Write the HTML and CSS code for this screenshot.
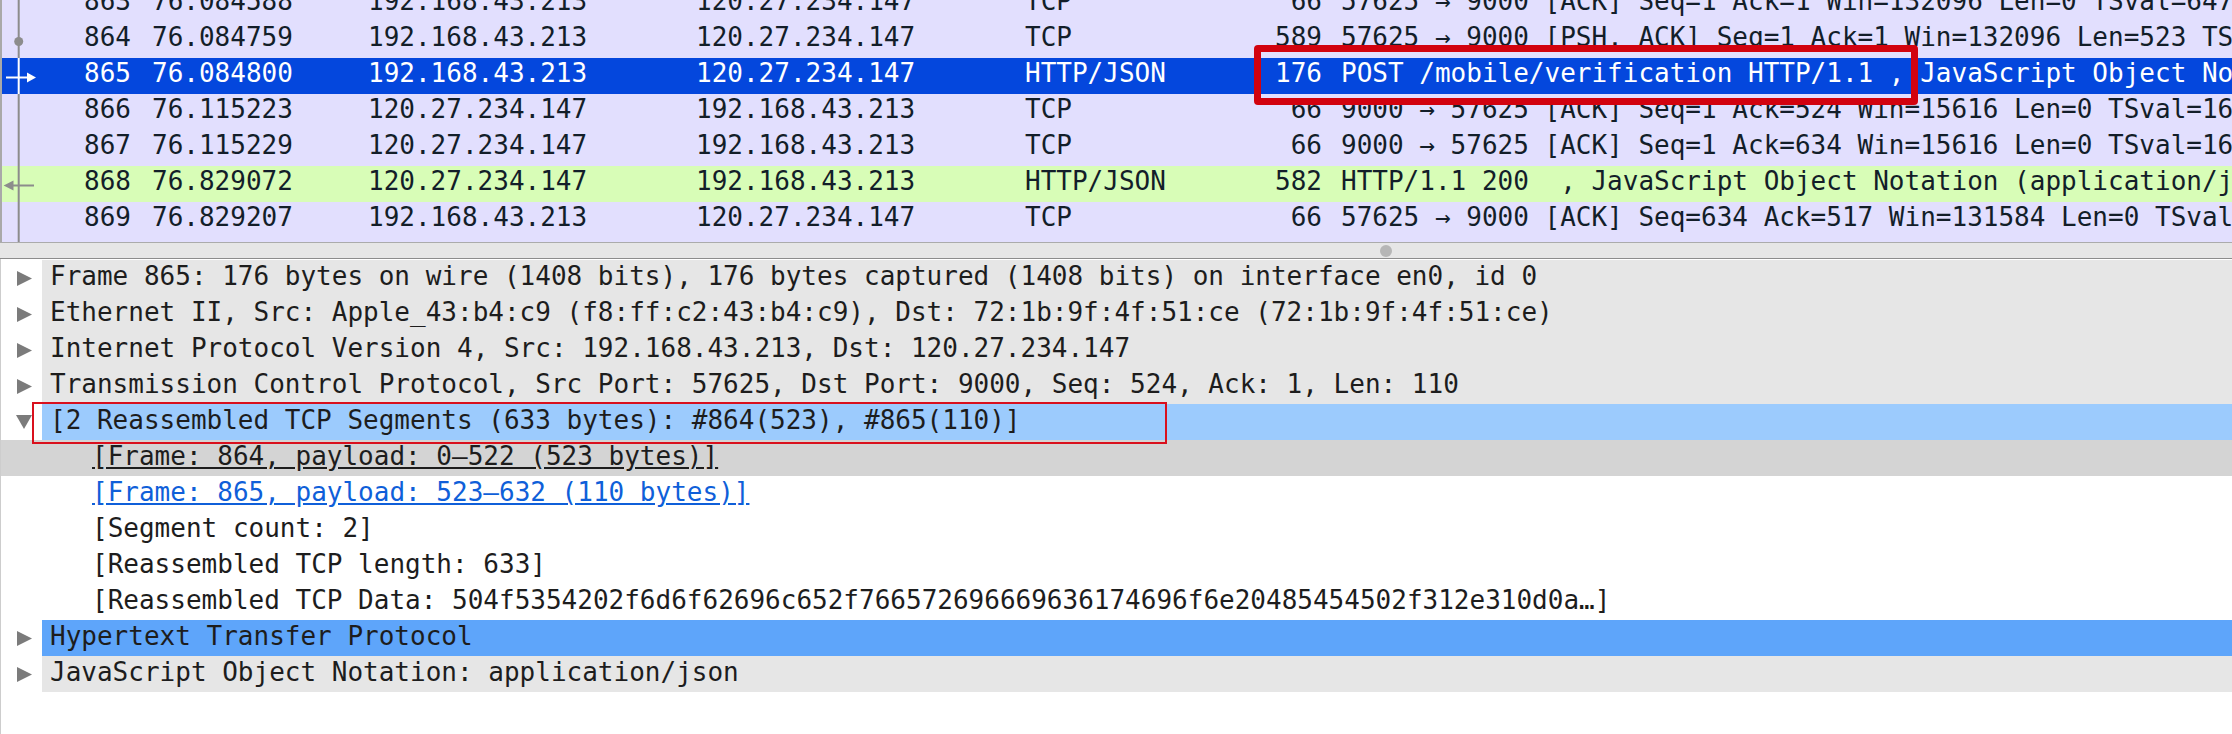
FILE: index.html
```html
<!DOCTYPE html>
<html>
<head>
<meta charset="utf-8">
<title>Packet capture</title>
<link rel="stylesheet" href="styles.css">
</head>
<body>
<div class="list">
  <div class="rows">
    <div class="pkt tcp">
      <span class="mk"><svg width="48" height="36"><rect x="15.7" y="0" width="2" height="36" fill="#8c8c8c"/></svg></span>
      <span class="no">863</span><span class="time">76.084588</span><span class="src">192.168.43.213</span><span class="dst">120.27.234.147</span><span class="proto">TCP</span><span class="len">66</span><span class="info">57625 → 9000 [ACK] Seq=1 Ack=1 Win=132096 Len=0 TSval=647</span>
    </div>
    <div class="pkt tcp">
      <span class="mk"><svg width="48" height="36"><rect x="15.7" y="0" width="2" height="36" fill="#8c8c8c"/><circle cx="16.7" cy="19.5" r="4.5" fill="#8c8c8c"/></svg></span>
      <span class="no">864</span><span class="time">76.084759</span><span class="src">192.168.43.213</span><span class="dst">120.27.234.147</span><span class="proto">TCP</span><span class="len">589</span><span class="info">57625 → 9000 [PSH, ACK] Seq=1 Ack=1 Win=132096 Len=523 TSval=647</span>
    </div>
    <div class="pkt sel">
      <span class="mk"><svg width="48" height="36"><rect x="15.7" y="0" width="2" height="36" fill="#ffffff"/><rect x="4" y="18.5" width="22" height="2" fill="#ffffff"/><polygon points="25,14.5 34,19.5 25,24.5" fill="#ffffff"/></svg></span>
      <span class="no">865</span><span class="time">76.084800</span><span class="src">192.168.43.213</span><span class="dst">120.27.234.147</span><span class="proto">HTTP/JSON</span><span class="len">176</span><span class="info">POST /mobile/verification HTTP/1.1 , JavaScript Object Notation (application/json)</span>
    </div>
    <div class="pkt tcp">
      <span class="mk"><svg width="48" height="36"><rect x="15.7" y="0" width="2" height="36" fill="#8c8c8c"/></svg></span>
      <span class="no">866</span><span class="time">76.115223</span><span class="src">120.27.234.147</span><span class="dst">192.168.43.213</span><span class="proto">TCP</span><span class="len">66</span><span class="info">9000 → 57625 [ACK] Seq=1 Ack=524 Win=15616 Len=0 TSval=1634</span>
    </div>
    <div class="pkt tcp">
      <span class="mk"><svg width="48" height="36"><rect x="15.7" y="0" width="2" height="36" fill="#8c8c8c"/></svg></span>
      <span class="no">867</span><span class="time">76.115229</span><span class="src">120.27.234.147</span><span class="dst">192.168.43.213</span><span class="proto">TCP</span><span class="len">66</span><span class="info">9000 → 57625 [ACK] Seq=1 Ack=634 Win=15616 Len=0 TSval=1634</span>
    </div>
    <div class="pkt http">
      <span class="mk"><svg width="48" height="36"><rect x="15.7" y="0" width="2" height="36" fill="#8c8c8c"/><rect x="11" y="18.5" width="21" height="2" fill="#8c8c8c"/><polygon points="1.6,19.5 11.5,14.5 11.5,24.5" fill="#8c8c8c"/></svg></span>
      <span class="no">868</span><span class="time">76.829072</span><span class="src">120.27.234.147</span><span class="dst">192.168.43.213</span><span class="proto">HTTP/JSON</span><span class="len">582</span><span class="info">HTTP/1.1 200  , JavaScript Object Notation (application/json)</span>
    </div>
    <div class="pkt tcp">
      <span class="mk"><svg width="48" height="36"><rect x="15.7" y="0" width="2" height="36" fill="#8c8c8c"/></svg></span>
      <span class="no">869</span><span class="time">76.829207</span><span class="src">192.168.43.213</span><span class="dst">120.27.234.147</span><span class="proto">TCP</span><span class="len">66</span><span class="info">57625 → 9000 [ACK] Seq=634 Ack=517 Win=131584 Len=0 TSval=647</span>
    </div>
    <div class="pkt tcp">
      <span class="mk"><svg width="48" height="36"><rect x="15.7" y="0" width="2" height="36" fill="#8c8c8c"/></svg></span>
    </div>
  </div>
  <div class="callout callout-list"></div>
</div>

<div class="split"><span class="handle"></span></div>

<div class="tree">
  <div class="node gray">
    <span class="tw"><svg width="41" height="36"><polygon points="16,11 31,18.5 16,26" fill="#7b7b7b"/></svg></span>
    <span class="lbl">Frame 865: 176 bytes on wire (1408 bits), 176 bytes captured (1408 bits) on interface en0, id 0</span>
  </div>
  <div class="node gray">
    <span class="tw"><svg width="41" height="36"><polygon points="16,11 31,18.5 16,26" fill="#7b7b7b"/></svg></span>
    <span class="lbl">Ethernet II, Src: Apple_43:b4:c9 (f8:ff:c2:43:b4:c9), Dst: 72:1b:9f:4f:51:ce (72:1b:9f:4f:51:ce)</span>
  </div>
  <div class="node gray">
    <span class="tw"><svg width="41" height="36"><polygon points="16,11 31,18.5 16,26" fill="#7b7b7b"/></svg></span>
    <span class="lbl">Internet Protocol Version 4, Src: 192.168.43.213, Dst: 120.27.234.147</span>
  </div>
  <div class="node gray">
    <span class="tw"><svg width="41" height="36"><polygon points="16,11 31,18.5 16,26" fill="#7b7b7b"/></svg></span>
    <span class="lbl">Transmission Control Protocol, Src Port: 57625, Dst Port: 9000, Seq: 524, Ack: 1, Len: 110</span>
  </div>
  <div class="node lblue">
    <span class="tw"><svg width="41" height="36"><polygon points="15,11 31,11 23,25" fill="#7b7b7b"/></svg></span>
    <span class="lbl">[2 Reassembled TCP Segments (633 bytes): #864(523), #865(110)]</span>
  </div>
  <div class="node sub dim"><span class="t">[Frame: 864, payload: 0–522 (523 bytes)]</span></div>
  <div class="node sub"><span class="t link">[Frame: 865, payload: 523–632 (110 bytes)]</span></div>
  <div class="node sub"><span>[Segment count: 2]</span></div>
  <div class="node sub"><span>[Reassembled TCP length: 633]</span></div>
  <div class="node sub"><span>[Reassembled TCP Data: 504f5354202f6d6f62696c652f766572696669636174696f6e20485454502f312e310d0a…]</span></div>
  <div class="node blue">
    <span class="tw"><svg width="41" height="36"><polygon points="16,11 31,18.5 16,26" fill="#7b7b7b"/></svg></span>
    <span class="lbl">Hypertext Transfer Protocol</span>
  </div>
  <div class="node gray">
    <span class="tw"><svg width="41" height="36"><polygon points="16,11 31,18.5 16,26" fill="#7b7b7b"/></svg></span>
    <span class="lbl">JavaScript Object Notation: application/json</span>
  </div>
  <div class="callout callout-tree"></div>
</div>
</body>
</html>
```

FILE: styles.css
```css
* { box-sizing: border-box; }
html, body { margin: 0; padding: 0; }
body {
  width: 2232px;
  height: 734px;
  overflow: hidden;
  background: #ffffff;
  font-family: "DejaVu Sans Mono", monospace;
  font-size: 26px;
}

/* packet list */
.list {
  position: relative;
  height: 242px;
  overflow: hidden;
  background: #e2dffe;
  border-left: 2px solid #a9a9a9;
}
.rows { margin-top: -14px; }
.pkt {
  display: flex;
  height: 36px;
  line-height: 30px;
  white-space: pre;
  color: #131e29;
}
.pkt.tcp { background: #e2dffe; }
.pkt.http { background: #d8fdb7; }
.pkt.sel { background: #0447dd; color: #ffffff; }
.mk { flex: none; width: 48px; height: 36px; }
.mk svg { display: block; }
.no { flex: none; width: 81px; text-align: right; }
.time { flex: none; width: 237px; padding-left: 21px; }
.src { flex: none; width: 328px; }
.dst { flex: none; width: 329px; }
.proto { flex: none; width: 141px; }
.len { flex: none; width: 156px; text-align: right; }
.info { flex: 1; min-width: 0; overflow: hidden; padding-left: 19px; }

.callout { position: absolute; }
.callout-list {
  left: 1252px;
  top: 45px;
  width: 664px;
  height: 60px;
  border: 7px solid #d2020f;
  border-radius: 4px;
}

/* splitter */
.split {
  display: flex;
  align-items: center;
  height: 17px;
  padding-left: 1380px;
  background: #e6e6e6;
  border-top: 1px solid #ababab;
  border-bottom: 1px solid #8c8c8c;
}
.handle {
  width: 12px;
  height: 12px;
  border-radius: 50%;
  background: #b6b6b6;
}

/* details tree */
.tree {
  position: relative;
  height: 475px;
  padding-top: 1px;
  border-left: 1px solid #cdcdcd;
}
.node {
  display: flex;
  height: 36px;
  line-height: 33px;
  white-space: pre;
  color: #1d1d1d;
}
.tw { flex: none; width: 41px; }
.tw svg { display: block; }
.lbl { flex: 1; min-width: 0; overflow: hidden; padding-left: 8px; }
.node.gray .lbl { background: #e6e6e6; }
.node.lblue .lbl { background: #9ccbfd; }
.node.blue .lbl { background: #5ea5fa; }
.sub { padding-left: 91px; }
.sub.dim { background: #d4d4d4; }
.t { text-decoration: underline; }
.link { color: #0f5fd9; }

.callout-tree {
  left: 31px;
  top: 143px;
  width: 1135px;
  height: 42px;
  border: 2px solid #d9101d;
}
```
